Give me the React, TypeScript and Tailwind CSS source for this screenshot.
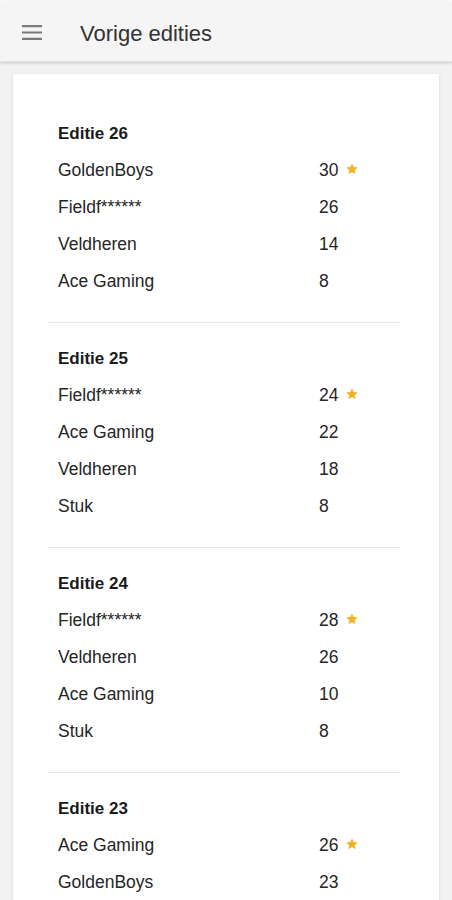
import React from "react";

type Row = { naam: string; score: number };
type Editie = { nummer: number; rows: Row[] };

const edities: Editie[] = [
  {
    nummer: 26,
    rows: [
      { naam: "GoldenBoys", score: 30 },
      { naam: "Fieldf******", score: 26 },
      { naam: "Veldheren", score: 14 },
      { naam: "Ace Gaming", score: 8 },
    ],
  },
  {
    nummer: 25,
    rows: [
      { naam: "Fieldf******", score: 24 },
      { naam: "Ace Gaming", score: 22 },
      { naam: "Veldheren", score: 18 },
      { naam: "Stuk", score: 8 },
    ],
  },
  {
    nummer: 24,
    rows: [
      { naam: "Fieldf******", score: 28 },
      { naam: "Veldheren", score: 26 },
      { naam: "Ace Gaming", score: 10 },
      { naam: "Stuk", score: 8 },
    ],
  },
  {
    nummer: 23,
    rows: [
      { naam: "Ace Gaming", score: 26 },
      { naam: "GoldenBoys", score: 23 },
    ],
  },
];

function Star() {
  return (
    <svg viewBox="0 0 24 24" className="w-[14px] h-[14px] ml-[7px] -mt-[3px]" fill="#f0b323">
      <path d="M12 17.27L18.18 21l-1.64-7.03L22 9.24l-7.19-.61L12 2 9.19 8.63 2 9.24l5.46 4.73L5.82 21z" />
    </svg>
  );
}

function MenuIcon() {
  return (
    <svg viewBox="0 0 20 15" className="w-[20px] h-[15px]" fill="#7a7a7a">
      <rect x="0" y="0" width="20" height="2.2" rx="0.5" />
      <rect x="0" y="6.4" width="20" height="2.2" rx="0.5" />
      <rect x="0" y="12.8" width="20" height="2.2" rx="0.5" />
    </svg>
  );
}

export default function App() {
  return (
    <div
      className="min-h-screen bg-[#f2f2f2] text-[#262626]"
      style={{ fontFamily: '"Liberation Sans", Arial, sans-serif' }}
    >
      {/* Toolbar */}
      <div className="pt-[2px] bg-[#fbfbfb]">
        <header className="h-[60px] bg-[#f5f5f5] flex items-center pt-[2px] shadow-[0_1px_3px_rgba(0,0,0,0.18)] border-b border-[#e2e2e2]">
          <div className="w-[80px] pl-[22px] flex items-center">
            <MenuIcon />
          </div>
          <h1 className="text-[22px] text-[#333] leading-none pt-[2px]">Vorige edities</h1>
        </header>
      </div>

      {/* Card */}
      <main className="px-[13px] pt-[12px]">
        <div className="bg-white shadow-[0_1px_3px_rgba(0,0,0,0.12)] pt-[24px] pl-[35px] pr-[39px]">
          {edities.map((e, i) => (
            <section
              key={e.nummer}
              className={`pt-[17px] pb-[22px] ${i < edities.length - 1 ? "border-b border-[#e6e6e6]" : ""}`}
            >
              <h2 className="h-[37px] flex items-center pl-[10px] text-[17px] font-bold text-[#1a1a1a]">
                Editie {e.nummer}
              </h2>
              {e.rows.map((r, j) => (
                <div key={j} className="h-[37px] flex items-center pl-[10px] text-[17.5px]">
                  <span className="w-[261px]">{r.naam}</span>
                  <span className="flex items-center">
                    {r.score}
                    {j === 0 && <Star />}
                  </span>
                </div>
              ))}
            </section>
          ))}
        </div>
      </main>
    </div>
  );
}
